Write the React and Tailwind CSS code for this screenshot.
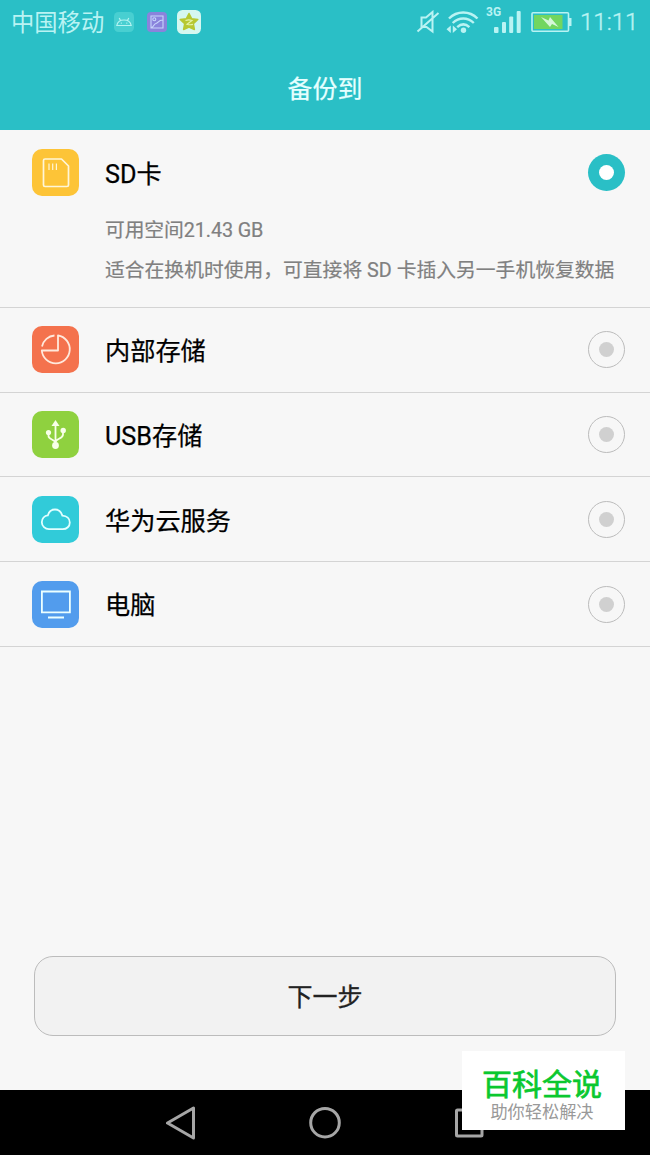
// App.jsx - Backup destination picker
import React, { useState } from 'react';

const SdCardIcon = () => (
  <svg viewBox="0 0 47 47" className="w-full h-full" fill="none" stroke="#fff6d8" strokeWidth="1.7" strokeLinejoin="round">
    <path d="M11.500 11.500a1.500 1.500 0 0 1 1.500-1.500H29.500l7 7V36a1.500 1.500 0 0 1-1.500 1.500H13a1.500 1.500 0 0 1-1.500-1.500z" />
    <path d="M17 14.500v6.500M20.700 14.500v6.500M24.400 14.500v6.500" strokeWidth="1.200" />
  </svg>
);

const StorageIcon = () => (
  <svg viewBox="0 0 47 47" className="w-full h-full" fill="none" stroke="#ffe9dc" strokeWidth="1.8">
    <path d="M26 9.500V24.500H9.800A14 14 0 1 0 26 9.500z" strokeLinejoin="round" />
    <path d="M10 20.500A14 14 0 0 1 22.500 9.500" />
  </svg>
);

const UsbIcon = () => (
  <svg viewBox="0 0 47 47" className="w-full h-full" fill="none" stroke="#f7ffe8" strokeWidth="1.8">
    <path d="M23.500 13v21M16.500 22v3c0 4 7 3 7 7.500M31 20v3.500c0 4.500-7.500 4-7.500 8" />
    <path d="M23.500 9l4 6h-8z" fill="#f7ffe8" stroke="none" />
    <circle cx="16.500" cy="21.500" r="2.600" fill="#f7ffe8" stroke="none" />
    <circle cx="31.200" cy="19.500" r="2.700" fill="#f7ffe8" stroke="none" />
    <circle cx="23.500" cy="34.500" r="3.400" fill="#f7ffe8" stroke="none" />
  </svg>
);

const CloudIcon = () => (
  <svg viewBox="0 0 47 47" className="w-full h-full" fill="none" stroke="#e2ffff" strokeWidth="1.800">
    <path d="M17 33.200a7.200 7.200 0 0 1-7.200-7c0-3.700 2.600-6.600 6-6.800C16.800 15.800 19.500 13.500 23 13.500s6.200 2.500 7.400 6.100c4.300.2 7.400 3 7.400 6.800 0 3.900-3 6.800-7 6.800z" />
  </svg>
);

const ComputerIcon = () => (
  <svg viewBox="0 0 47 47" className="w-full h-full" fill="none" stroke="#ecffff" strokeWidth="1.800">
    <path d="M9.900 10.500h28v20.800h-28zM16 36.500h16" />
  </svg>
);

const OPTIONS = [
  {
    id: 'sd',
    label: 'SD卡',
    color: 'bg-[#fdc437]',
    icon: SdCardIcon,
    space: '可用空间21.43 GB',
    hint: '适合在换机时使用，可直接将 SD 卡插入另一手机恢复数据',
  },
  { id: 'internal', label: '内部存储', color: 'bg-[#f4724d]', icon: StorageIcon },
  { id: 'usb', label: 'USB存储', color: 'bg-[#8fd13f]', icon: UsbIcon },
  { id: 'cloud', label: '华为云服务', color: 'bg-[#31cbd9]', icon: CloudIcon },
  { id: 'pc', label: '电脑', color: 'bg-[#529ced]', icon: ComputerIcon },
];

const StatusBar = () => (
  <div className="h-[44px] flex items-center justify-between pl-[11px] pr-3 text-[#b9f3f3]">
    <div className="flex items-center">
      <span className="text-[23.300px] leading-none whitespace-nowrap pt-[4px]">中国移动</span>
      <svg className="w-5 h-5 ml-[10px]" viewBox="0 0 20 20" fill="none" stroke="#b4f4f2" strokeWidth="1.200">
        <rect width="20" height="20" rx="4.500" fill="#48cfd1" stroke="none" />
        <path d="M2.800 13.500c.7-3.500 3.500-5.500 7.200-5.500s6.500 2 7.200 5.500zM6.500 8.500L5.200 6M13.500 8.500L14.800 6" />
        <path d="M6.800 11.200h1M12.300 11.200h1" />
      </svg>
      <svg className="w-5 h-5 ml-[13px]" viewBox="0 0 20 20" fill="none" stroke="#c7d6fb" strokeWidth="1.100">
        <rect width="20" height="20" rx="4" fill="#8a83dc" stroke="none" />
        <path d="M4 4h12v12H4zM4.500 15.500c2.500-.7 2-3.500 4.500-4s2-3.500 7-3.500" />
        <circle cx="7.300" cy="7.300" r="1.500" />
      </svg>
      <svg className="w-6 h-6 ml-[10px]" viewBox="0 0 24 24" fill="none">
        <rect width="24" height="24" rx="5.500" fill="#d5f7f0" />
        <path d="M12 3.500l2.600 5.200 6.200.8-4.500 4.200 1.100 5.800L12 17l-5.400 2.500 1.100-5.800L3.200 9.500l6.200-.8z" fill="#b7c832" stroke="#b7c832" strokeWidth="1.500" strokeLinejoin="round" />
        <path d="M8.500 10.500c2-.7 4.500-.7 6.500 0L10 14.200c2 .7 4 .7 6 .2" stroke="#e5f5a8" strokeWidth="1.200" />
      </svg>
    </div>

    <div className="flex items-center">
      {/* muted speaker */}
      <svg className="w-6 h-6" viewBox="0 0 24 24" fill="none" stroke="#b9f3f3" strokeWidth="2">
        <path d="M5.500 17V7.500h4.500l6.500-5.500v19.500l-6-4.500zM1.500 21.500L22.500 3" />
      </svg>
      {/* wifi */}
      <svg className="w-[34px] h-6 ml-[5px]" viewBox="0 0 34 24" fill="none" stroke="#b9f3f3" strokeWidth="2.400">
        <path d="M4 8.500c8-8 20.500-8 28.500 0M7.700 13c6.300-6 14.800-6 21.100 0M12.200 17.200c4-3.700 8.200-3.700 12.200 0" />
        <circle cx="18.500" cy="20.300" r="2.700" fill="#b9f3f3" stroke="none" />
        <path d="M5.800 15.500v7.500L1.500 19.200zM7.800 15.500v7.500l4.200-3.800z" fill="#b9f3f3" stroke="none" />
      </svg>
      {/* signal */}
      <div className="flex items-start ml-[7px]">
        <span className="text-[12px] leading-none font-bold -mt-[4px] w-[8px]">3G</span>
        <svg className="w-[27px] h-6" viewBox="0 0 27 24" fill="#b9f3f3">
          <rect x="0" y="17" width="4.500" height="6" rx="1" />
          <rect x="8" y="12" width="4" height="11" rx="1" />
          <rect x="15.200" y="6.500" width="4" height="16.500" rx="1" />
          <rect x="22.700" y="1" width="4" height="22" rx="1" />
        </svg>
      </div>
      {/* battery */}
      <svg className="w-[41px] h-[22px] ml-[10px]" viewBox="0 0 41 22" fill="none">
        <rect x="1" y="1.700" width="36.500" height="18.500" rx="1" stroke="#b9f3f3" strokeWidth="1.600" />
        <rect x="3" y="4" width="28.500" height="14" fill="#72d660" />
        <path d="M39.200 7v8" stroke="#b9f3f3" strokeWidth="2.600" />
        <path d="M10 6l7.500 3.500 1.500-3.500 8.500 10-6.500-3-2 3z" fill="#d5f7d8" />
      </svg>
      <span className="font-[Roboto] font-light text-[24px] leading-none ml-2 w-[58px] whitespace-nowrap [-webkit-text-stroke:0.400px_#b9f3f3]">11:11</span>
    </div>
  </div>
);

const Radio = ({ checked }) =>
  checked ? (
    <span className="w-[37px] h-[37px] rounded-full bg-[#2abfc6] flex items-center justify-center shrink-0">
      <span className="w-[15px] h-[15px] rounded-full bg-white" />
    </span>
  ) : (
    <span className="w-[37px] h-[37px] rounded-full border border-[#bcbcbc] flex items-center justify-center shrink-0">
      <span className="w-[15px] h-[15px] rounded-full bg-[#d0d0d0]" />
    </span>
  );

const OptionRow = ({ option, checked, onSelect }) => {
  const Icon = option.icon;
  return (
    <div className="border-b border-[#d4d4d4]" onClick={() => onSelect(option.id)}>
      <div className="h-[83.800px] pl-8 pr-[25px] flex items-center">
        <div className={`w-[47px] h-[47px] rounded-[10px] shrink-0 ${option.color}`}>
          <Icon />
        </div>
        <span className="flex-1 ml-[26px] pt-[4px] text-[25.200px] leading-none text-black [-webkit-text-stroke:0.250px_black]">
          {option.label}
        </span>
        <Radio checked={checked} />
      </div>
      {option.hint && (
        <div className="pl-[105px] h-[96px] text-[19.800px] leading-[40px] text-[#808080] [-webkit-text-stroke:0.200px_#808080] whitespace-nowrap -mt-[4px]">
          <p className="tracking-[-0.100px]">{option.space}</p>
          <p>{option.hint}</p>
        </div>
      )}
    </div>
  );
};

const App = () => {
  const [selected, setSelected] = useState('sd');

  return (
    <div className="relative w-[650px] h-[1155px] flex flex-col overflow-hidden bg-[#f7f7f7] font-[Roboto,'Noto_Sans_CJK_SC',sans-serif]">
      {/* HEADER */}
      <header className="h-[130px] shrink-0 bg-[#2abfc6]">
        <StatusBar />
        <h1 className="h-[86px] pt-[4px] flex items-center justify-center text-[25px] leading-none text-[#e6ffff] [-webkit-text-stroke:0.250px_#e6ffff]">
          备份到
        </h1>
      </header>

      {/* DESTINATIONS */}
      <main className="flex-1 pt-[1px]">
        {OPTIONS.map((option) => (
          <OptionRow key={option.id} option={option} checked={option.id === selected} onSelect={setSelected} />
        ))}
      </main>

      <div className="px-[34px] pb-[54px]">
        <button className="w-full h-20 pt-[3px] rounded-[19px] border border-[#bcbcbc] bg-[#f2f2f2] text-[25px] leading-none text-[#222] [-webkit-text-stroke:0.300px_#222]">
          下一步
        </button>
      </div>

      {/* NAVIGATION BAR */}
      <nav className="h-[65px] shrink-0 bg-black flex items-center justify-center gap-[110px]">
        <svg className="w-[34px] h-[34px]" viewBox="0 0 34 34" fill="none" stroke="#a6a6a6" strokeWidth="3" strokeLinejoin="round">
          <path d="M3.500 17L29.500 2v30z" />
        </svg>
        <svg className="w-[34px] h-[34px]" viewBox="0 0 34 34" fill="none" stroke="#a6a6a6" strokeWidth="3">
          <circle cx="17" cy="16.700" r="14.300" />
        </svg>
        <svg className="w-[34px] h-[34px]" viewBox="0 0 34 34" fill="none" stroke="#a6a6a6" strokeWidth="3">
          <rect x="4.500" y="4" width="25.500" height="26" rx="1" />
        </svg>
      </nav>

      {/* BRAND BADGE */}
      <div className="absolute left-[462px] top-[1051px] w-[163px] h-[79px] bg-white flex flex-col items-center pt-[17px] pr-[3px] whitespace-nowrap">
        <span className="text-[30px] leading-[33px] text-[#0ac82f] [-webkit-text-stroke:0.700px_#0ac82f]">百科全说</span>
        <span className="text-[17.200px] leading-[22px] text-[#999]">助你轻松解决</span>
      </div>
    </div>
  );
};

export default App;
